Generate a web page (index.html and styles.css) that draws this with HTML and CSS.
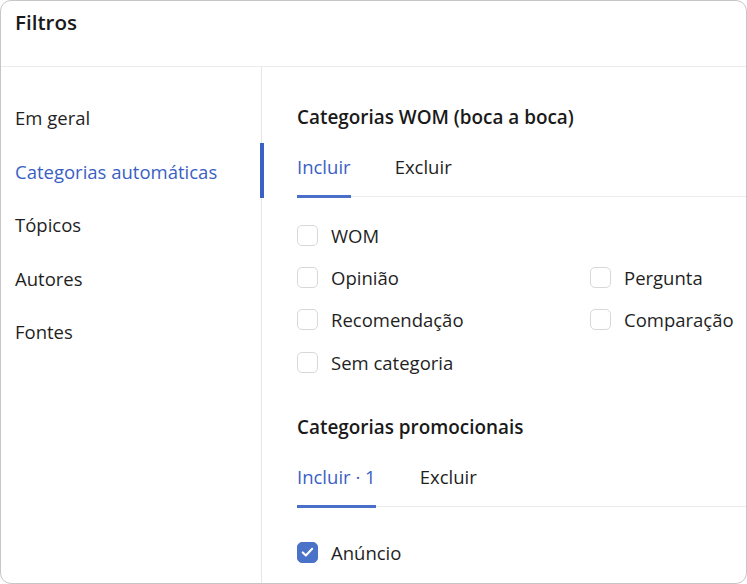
FILE: index.html
```html
<!DOCTYPE html>
<html lang="pt">
<head>
<meta charset="utf-8">
<title>Filtros</title>
<link rel="stylesheet" href="styles.css">
</head>
<body>
<div class="card">
  <header class="card-header">
    <h1 class="title">Filtros</h1>
  </header>
  <div class="card-body">
    <nav class="sidebar">
      <div class="nav-item">Em geral</div>
      <div class="nav-item active">Categorias automáticas</div>
      <div class="nav-item">Tópicos</div>
      <div class="nav-item">Autores</div>
      <div class="nav-item">Fontes</div>
    </nav>
    <main class="content">
      <section class="section">
        <h2 class="section-title">Categorias WOM (boca a boca)</h2>
        <div class="tabs">
          <div class="tab active">Incluir</div>
          <div class="tab">Excluir</div>
        </div>
        <div class="options first">
          <label class="option"><span class="box"></span><span>WOM</span></label>
          <span></span>
          <label class="option"><span class="box"></span><span>Opinião</span></label>
          <label class="option"><span class="box"></span><span>Pergunta</span></label>
          <label class="option"><span class="box"></span><span>Recomendação</span></label>
          <label class="option"><span class="box"></span><span>Comparação</span></label>
          <label class="option"><span class="box"></span><span>Sem categoria</span></label>
        </div>
      </section>
      <section class="section second">
        <h2 class="section-title">Categorias promocionais</h2>
        <div class="tabs">
          <div class="tab active">Incluir · 1</div>
          <div class="tab">Excluir</div>
        </div>
        <div class="options last">
          <label class="option"><span class="box checked"><svg viewBox="0 0 20 20" width="20" height="20"><path d="M5 10.4l3.3 3.2 6.6-7" fill="none" stroke="#fff" stroke-width="2.2" stroke-linecap="round" stroke-linejoin="round"/></svg></span><span>Anúncio</span></label>
        </div>
      </section>
    </main>
  </div>
</div>
</body>
</html>
```

FILE: styles.css
```css
* { box-sizing: border-box; }
html, body { margin: 0; padding: 0; background: #fff; }
body {
  font-family: "Open Sans", "Noto Sans", sans-serif;
  color: #1f1f1f;
  width: 747px;
  height: 584px;
  overflow: hidden;
}
.card {
  width: 747px;
  height: 584px;
  border: 1px solid #c6c6c6;
  border-radius: 11px;
  display: flex;
  flex-direction: column;
  overflow: hidden;
  background: #fff;
}
.card-header {
  height: 66px;
  border-bottom: 1px solid #ececec;
  padding: 7px 14px 0;
  flex: none;
}
.title {
  margin: 0;
  font-size: 20.6px;
  font-weight: 600;
  line-height: 28px;
  color: #1a1a1a;
}
.card-body {
  flex: 1;
  display: flex;
  min-height: 0;
}
.sidebar {
  width: 261px;
  flex: none;
  border-right: 1px solid #e6e6e6;
  padding-top: 24px;
}
.nav-item {
  position: relative;
  height: 53.5px;
  display: flex;
  align-items: center;
  padding-left: 14px;
  font-size: 18.5px;
  color: #1f1f1f;
}
.nav-item.active { color: #3a5fc4; }
.nav-item.active::after {
  content: "";
  position: absolute;
  right: -3px;
  top: -2px;
  bottom: 0;
  width: 4px;
  background: #3a62c6;
}
.content {
  flex: 1;
  padding: 38px 0 0 35px;
  min-width: 0;
}
.section-title {
  margin: 0;
  font-size: 18.9px;
  font-weight: 600;
  line-height: 24px;
  color: #1a1a1a;
}
.tabs {
  display: flex;
  gap: 44px;
  margin-top: 26px;
  border-bottom: 1px solid #ececec;
}
.section.second .tabs { margin-top: 25.5px; }
.tab {
  font-size: 18.5px;
  line-height: 24px;
  padding-bottom: 16px;
  border-bottom: 3px solid transparent;
  margin-bottom: -2px;
  color: #1f1f1f;
}
.tab.active {
  color: #3a5fc4;
  border-bottom-color: #4a6fc9;
}
.options {
  display: grid;
  grid-template-columns: 293px auto;
  grid-auto-rows: 42.4px;
}
.options.first { padding-top: 17px; }
.options.last { padding-top: 24.5px; }
.section.second { margin-top: 31.5px; }
.option {
  display: flex;
  align-items: center;
  gap: 13px;
  font-size: 18.5px;
  color: #1f1f1f;
  white-space: nowrap;
}
.box {
  width: 21px;
  height: 21px;
  border: 1px solid #d8d8d8;
  border-radius: 5px;
  flex: none;
  display: flex;
  align-items: center;
  justify-content: center;
}
.box.checked {
  background: #4a72c9;
  border-color: #4a72c9;
}
.box svg { display: block; }
```
